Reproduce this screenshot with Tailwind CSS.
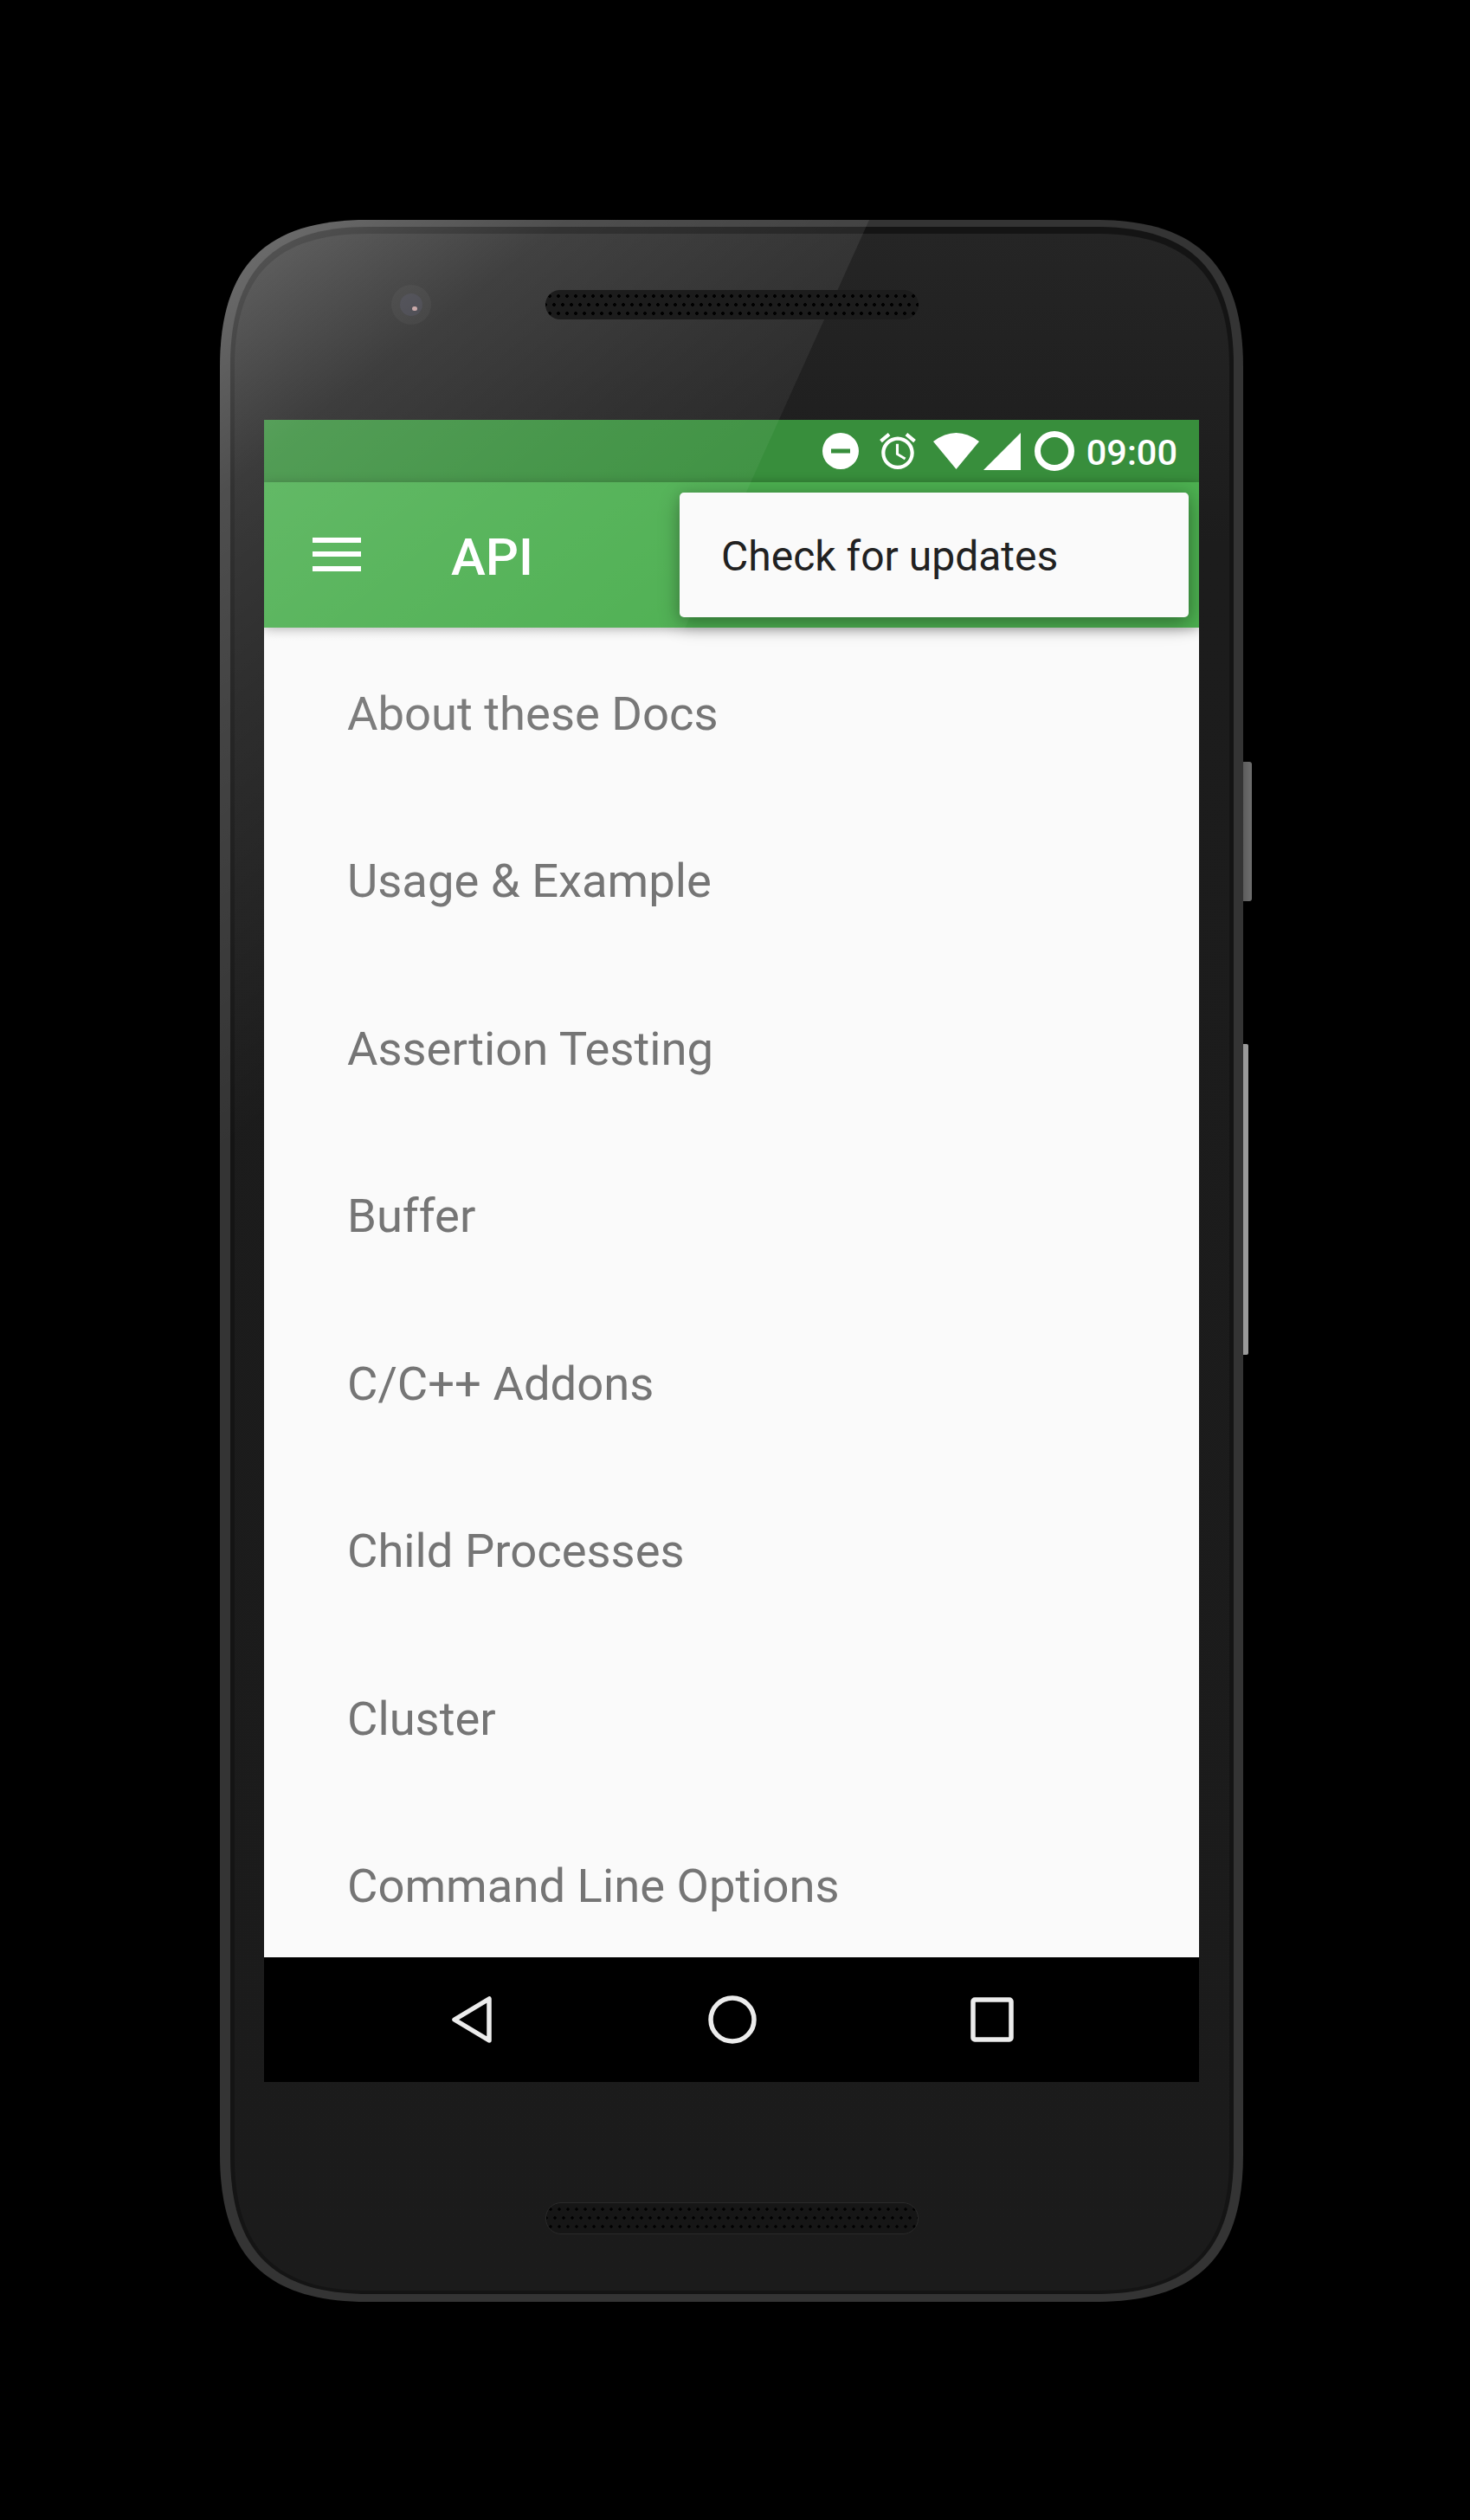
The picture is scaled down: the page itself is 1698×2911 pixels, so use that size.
<!DOCTYPE html>
<html>
<head>
<meta charset="utf-8">
<script src="https://cdn.jsdelivr.net/npm/@tailwindcss/browser@4"></script>
<title>API</title>
</head>
<body class="bg-black">
<div class="w-[1698px] h-[2911px] bg-black pt-[254px] pl-[254px] font-['Roboto',sans-serif] overflow-hidden">
  <div class="relative w-[1182px] h-[2405px]">
    <!-- side buttons -->
    <div class="absolute left-[1182px] top-[626px] w-[10px] h-[161px] rounded-r-[3px] bg-gradient-to-r from-[#5c5c5c] to-[#6e6e6e]"></div>
    <div class="absolute left-[1182px] top-[952px] w-[6px] h-[359px] rounded-r-[2px] bg-[#9a9a9a]"></div>

    <!-- device shell: band, dark ring, body -->
    <svg class="absolute inset-0 w-[1182px] h-[2405px]" viewBox="0 0 1182 2405">
      <defs>
        <linearGradient id="bodyfill" gradientUnits="userSpaceOnUse" x1="0" y1="16" x2="0" y2="2392">
          <stop offset="0" stop-color="#252525"/>
          <stop offset="0.15" stop-color="#1c1c1c"/>
          <stop offset="1" stop-color="#1b1b1b"/>
        </linearGradient>
      </defs>
      <path fill="#343434" d="M0 170C0 53 53 0 170 0H1012C1129 0 1182 53 1182 170V2235C1182 2352 1129 2405 1012 2405H170C53 2405 0 2352 0 2235Z"/>
      <path fill="#141414" d="M12 168C12 58 62 8 172 8H1011C1121 8 1171 58 1171 168V2236C1171 2346 1121 2396 1011 2396H172C62 2396 12 2346 12 2236Z"/>
      <path fill="url(#bodyfill)" d="M17 170C17 64 65 16 171 16H1012C1118 16 1166 64 1166 170V2238C1166 2344 1118 2392 1012 2392H171C65 2392 17 2344 17 2238Z"/>
    </svg>

    <!-- content inside the shell -->
    <div class="relative w-full h-full pt-[16px] pl-[17px] pr-[16px] pb-[13px] flex flex-col items-center">
      <!-- top bezel -->
      <div class="relative w-full h-[215px] pt-[65px] flex justify-center shrink-0">
        <div class="absolute left-[181px] top-[59px] w-[46px] h-[46px] rounded-full bg-white/[0.04] flex items-center justify-center">
          <div class="relative w-[26px] h-[26px] rounded-full bg-[#33333b]">
            <div class="absolute left-[14px] top-[15px] w-[6px] h-[5px] rounded-full bg-[#c09a9a]"></div>
          </div>
        </div>
        <div class="relative z-40 w-[431px] h-[34px] rounded-[17px] bg-[#1c1c1c] bg-[radial-gradient(circle,#000_1.6px,transparent_2.2px),radial-gradient(circle,#000_1.6px,transparent_2.2px)] bg-[length:10px_20px] bg-[position:0_-3px,5px_7px]"></div>
      </div>

      <!-- screen -->
      <div class="relative w-[1080px] h-[1920px] shrink-0 flex flex-col overflow-hidden bg-[#fafafa] ml-[-1px]">
        <!-- status bar -->
        <div class="h-[72px] shrink-0 bg-[#388e3c] flex items-center justify-end pr-[25px] text-white">
          <svg class="w-[42px] h-[42px] mt-[-1px] mr-[24px]" viewBox="0 0 42 42"><path fill="#fff" fill-rule="evenodd" d="M21 0a21 21 0 1 0 0 42a21 21 0 1 0 0-42zM10 18.500h22v5h-22z"/></svg>
          <svg class="w-[42px] h-[42px] mr-[20px]" viewBox="2 1.860 20 20.140"><path fill="#fff" d="M22 5.720l-4.600-3.860-1.290 1.530 4.600 3.860L22 5.720zM7.880 3.390L6.600 1.860 2 5.710l1.290 1.530 4.590-3.850zM12.500 8H11v6l4.750 2.850.75-1.230-4-2.370V8zM12 4c-4.970 0-9 4.030-9 9s4.030 9 9 9 9-4.030 9-9-4.030-9-9-9zm0 16c-3.870 0-7-3.130-7-7s3.130-7 7-7 7 3.130 7 7-3.130 7-7 7z"/></svg>
          <svg class="w-[53px] h-[42px] mr-[5px]" viewBox="0 0 53 42"><path fill="#fff" d="M26.500 42L0 10Q26.500-10 53 10Z"/></svg>
          <svg class="w-[43px] h-[43px] mr-[16px]" viewBox="0 0 43 43"><path fill="#fff" d="M0 43L43 0V43Z"/></svg>
          <svg class="w-[46px] h-[46px] mt-[-1px] mr-[14px]" viewBox="0 0 46 46"><circle cx="23" cy="23" r="19.500" fill="none" stroke="#fff" stroke-width="7"/></svg>
          <span class="text-[41.500px] leading-none font-medium mt-[3px]">09:00</span>
        </div>

        <!-- toolbar -->
        <div class="relative z-10 h-[168px] shrink-0 bg-[#4caf50] flex items-center shadow-[0_2px_12px_rgba(0,0,0,0.3)]">
          <div class="w-[56px] ml-[56px] flex flex-col gap-[10.500px] mt-[-2px]">
            <div class="h-[6px] bg-white"></div>
            <div class="h-[6px] bg-white"></div>
            <div class="h-[6px] bg-white"></div>
          </div>
          <span class="ml-[104px] mt-[5px] text-[60px] leading-none font-medium text-white">API</span>
        </div>

        <!-- list -->
        <div class="flex-1 min-h-0 pt-[3px] overflow-hidden text-[54.400px] leading-none text-[#757575]">
          <div class="h-[193.500px] flex items-center pl-[96px]">About these Docs</div>
          <div class="h-[193.500px] flex items-center pl-[96px]">Usage &amp; Example</div>
          <div class="h-[193.500px] flex items-center pl-[96px]">Assertion Testing</div>
          <div class="h-[193.500px] flex items-center pl-[96px]">Buffer</div>
          <div class="h-[193.500px] flex items-center pl-[96px]">C/C++ Addons</div>
          <div class="h-[193.500px] flex items-center pl-[96px]">Child Processes</div>
          <div class="h-[193.500px] flex items-center pl-[96px]">Cluster</div>
          <div class="h-[193.500px] flex items-center pl-[96px]">Command Line Options</div>
        </div>

        <!-- nav bar -->
        <div class="relative z-10 h-[144px] shrink-0 bg-black flex items-center">
          <svg class="w-[48px] h-[56px] ml-[216px]" viewBox="0 0 48 56"><path d="M44 4V52L4 28Z" fill="none" stroke="#ececec" stroke-width="5.500" stroke-linejoin="round"/></svg>
          <svg class="w-[56px] h-[56px] ml-[249px]" viewBox="0 0 56 56"><circle cx="28" cy="28" r="25" fill="none" stroke="#ececec" stroke-width="5.500"/></svg>
          <svg class="w-[50px] h-[52px] ml-[247px]" viewBox="0 0 50 52"><rect x="3" y="3" width="44" height="46" rx="2" fill="none" stroke="#ececec" stroke-width="5.500"/></svg>
        </div>

        <!-- overflow menu -->
        <div class="absolute z-20 left-[480px] top-[84px] w-[588px] h-[144px] rounded-[5px] bg-[#fafafa] flex items-center pl-[48px] pt-[4px] text-[48px] leading-none text-[#212121] shadow-[0_8px_24px_rgba(0,0,0,0.3),0_0_14px_rgba(0,0,0,0.12)]">Check for updates</div>
      </div>

      <!-- bottom bezel -->
      <div class="w-full flex-1 pt-[139px] flex justify-center">
        <div class="w-[431px] h-[37px] rounded-[18px] border border-[#2a2a2a] bg-[#161616] bg-[radial-gradient(circle,#000_1.4px,transparent_2px),radial-gradient(circle,#000_1.4px,transparent_2px)] bg-[length:10px_20px] bg-[position:0_-3px,5px_7px]"></div>
      </div>
    </div>

    <!-- glass reflection over the upper left of the device -->
    <svg class="absolute inset-0 w-[1182px] h-[2405px] pointer-events-none z-30" viewBox="0 0 1182 2405">
      <defs>
        <linearGradient id="glare" gradientUnits="userSpaceOnUse" x1="46" y1="26" x2="542" y2="654">
          <stop offset="0" stop-color="#fff" stop-opacity="0.27"/>
          <stop offset="0.25" stop-color="#fff" stop-opacity="0.13"/>
          <stop offset="0.5" stop-color="#fff" stop-opacity="0.08"/>
          <stop offset="1" stop-color="#fff" stop-opacity="0"/>
        </linearGradient>
        <clipPath id="shell"><path d="M0 170C0 53 53 0 170 0H1012C1129 0 1182 53 1182 170V2235C1182 2352 1129 2405 1012 2405H170C53 2405 0 2352 0 2235Z"/></clipPath>
      </defs>
      <polygon clip-path="url(#shell)" fill="url(#glare)" points="0,0 750,0 100,1440 0,1440"/>
    </svg>
  </div>
</div>
</body>
</html>
